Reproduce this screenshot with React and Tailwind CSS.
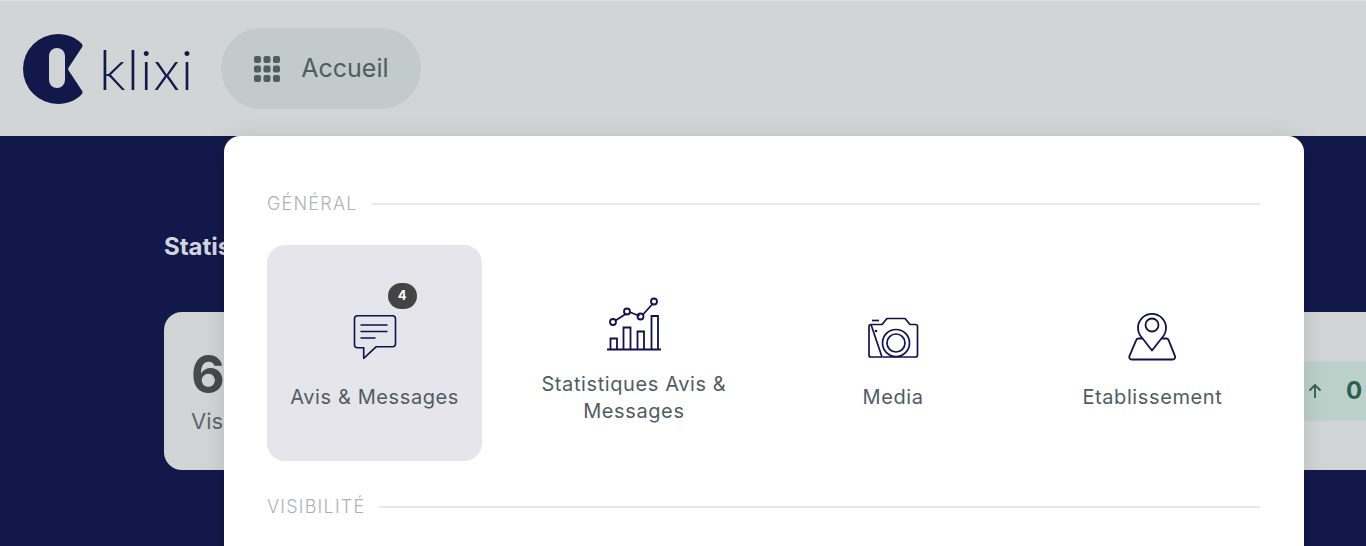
import React from 'react';

const ink = '#0f1150';

function MessageIcon() {
  return <svg width="64" height="64" viewBox="0 0 64 64" fill="none" stroke={ink} strokeWidth="1.6" strokeLinejoin="round">
    <path d="M14.5 10.8h35a3 3 0 0 1 3 3v25a3 3 0 0 1-3 3H33l-12.300 11.500V42.800h-6.200a3 3 0 0 1-3-3v-26a3 3 0 0 1 3-3z" />
    <path d="M17.500 20h27M17.500 26.500h27M17.500 33h15" />
  </svg>;
}

function ChartIcon() {
  return <svg width="64" height="64" viewBox="0 0 64 64" fill="none" stroke={ink} strokeWidth="1.8">
    <path d="M5 57.500h54" />
    <path d="M8.500 57v-10.500h6.500V57M21.500 57V35.500h7V57M35.500 57V39.500h6.500V57M49.500 57V24h6.500v33" />
    <path d="M13.500 28.500l11-7M27.500 20l10 4M40.500 23l10.500-11.500" />
    <circle cx="11" cy="30" r="3" />
    <circle cx="25" cy="19.500" r="3" />
    <circle cx="38.500" cy="24.500" r="3" />
    <circle cx="52" cy="9.500" r="3" />
  </svg>;
}

function CameraIcon() {
  return <svg width="64" height="64" viewBox="0 0 64 64" fill="none" stroke={ink} strokeWidth="1.7" strokeLinejoin="round">
    <path d="M10 19.500h11l5-6h18l5 6h5.500a2 2 0 0 1 2 2V50a2 2 0 0 1-2 2H22M21 52H10a2 2 0 0 1-2-2V21.500a2 2 0 0 1 2-2z" />
    <path d="M11 15.500h7" />
    <circle cx="35" cy="38" r="13.500" fill="#fff" />
    <circle cx="35" cy="38" r="9" />
    <circle cx="15" cy="26" r="1.300" fill={ink} stroke="none" />
  </svg>;
}

function PinIcon() {
  return <svg width="64" height="64" viewBox="0 0 64 64" fill="none" stroke={ink} strokeWidth="1.8" strokeLinejoin="round">
    <path d="M22 33.500h-3.500a2.500 2.500 0 0 0-2.300 1.600l-6.800 16a2.500 2.500 0 0 0 2.300 3.400h41a2.500 2.500 0 0 0 2.300-3.400l-6.400-16a2.500 2.500 0 0 0-2.300-1.600H42" />
    <path d="M32 45.500l-10.200-13a14 14 0 1 1 20.400 0z" fill="#fff" />
    <circle cx="32" cy="20" r="6.500" />
  </svg>;
}

function Logo() {
  return <div className="flex items-center">
    <svg width="60" height="72" viewBox="0 0 60 72" className="shrink-0">
      <path fill="#13184b" d="M35 1a35 35 0 0 0 0 70c9.500 0 17.500-3.500 23.500-9.500a3 3 0 0 0 0-4.500L46 38a3 3 0 0 1 0-4L58.500 15a3 3 0 0 0 0-4.500C52.500 4.500 44.500 1 35 1z" />
      <rect x="26" y="15" width="16" height="40" rx="8" fill="#d1d5d6" />
    </svg>
    <span className="ml-[16px] text-[56px] leading-none font-light tracking-[1px] text-[#13184b] font-['Lato',sans-serif]">klixi</span>
  </div>;
}

function SectionTitle({ children }) {
  return <div className="flex items-center gap-[14px]">
    <span className="text-[18px] leading-[26px] font-light tracking-[1.2px] text-[#aeb1b6]">{children}</span>
    <div className="h-[2px] flex-1 bg-[#e9e9ea]" />
  </div>;
}

function Tile({ label, icon, active, badge }) {
  return <div className={`h-[216px] rounded-[18px] pt-[10px] flex flex-col items-center justify-center gap-[15px] ${active ? 'bg-[#e5e5eb]' : ''}`}>
    <div className="relative w-[64px] h-[64px]">
      {icon}
      {badge && <span className="absolute left-[45px] top-[-22px] w-[29px] h-[26px] rounded-full bg-[#444444] flex items-center justify-center text-[13px] font-bold text-white">{badge}</span>}
    </div>
    <p className="text-center text-[20px] leading-[27px] tracking-[0.6px] text-[#4e5d63] px-2">{label}</p>
  </div>;
}

export default function App() {
  return <div className="relative h-[546px] overflow-hidden bg-[#13184b] font-['Inter',sans-serif]">
    <header className="h-[136px] bg-[#d1d5d6] border-t border-[#dcdfe0] flex items-center pl-[23px] gap-[27px]">
      <Logo />
      <button className="w-[200px] h-[81px] rounded-full bg-[#c2cacb] flex items-center pl-[33px] gap-[21px] text-[25px] text-[#4f5d62]">
        <svg width="26" height="26" viewBox="0 0 26 26" fill="#4f5d62">
          <rect x="0" y="0" width="7" height="7" rx="2" />
          <rect x="9.500" y="0" width="7" height="7" rx="2" />
          <rect x="19" y="0" width="7" height="7" rx="2" />
          <rect x="0" y="9.500" width="7" height="7" rx="2" />
          <rect x="9.500" y="9.500" width="7" height="7" rx="2" />
          <rect x="19" y="9.500" width="7" height="7" rx="2" />
          <rect x="0" y="19" width="7" height="7" rx="2" />
          <rect x="9.500" y="19" width="7" height="7" rx="2" />
          <rect x="19" y="19" width="7" height="7" rx="2" />
        </svg>
        Accueil
      </button>
    </header>

    <main className="pl-[164px] pt-[94px]">
      <h2 className="text-[24px] leading-[34px] font-bold text-[#d3d6de]">Statistiques</h2>
      <div className="mt-[48px] w-[1300px] h-[158px] rounded-[18px] bg-[#d1d5d6] flex items-center justify-between pl-[27px] pr-[50px]">
        <div>
          <p className="text-[52px] leading-[60px] font-bold text-[#454a4c]">6</p>
          <p className="text-[22px] leading-[32px] text-[#5a676d]">Visites</p>
        </div>
        <div className="w-[120px] h-[60px] rounded-[16px] bg-[#bcd1c9] flex items-center pl-[14px] gap-[24px] text-[24px] font-bold text-[#2f5f52]">
          <svg width="14" height="16" viewBox="0 0 14 16" fill="none" stroke="#2f5f52" strokeWidth="1.8">
            <path d="M7 15V2M1.500 7.500L7 2l5.500 5.500" />
          </svg>
          0
        </div>
      </div>
    </main>

    <div className="absolute left-[224px] top-[136px] w-[1080px] h-[480px] rounded-[16px] bg-white shadow-[0_4px_24px_rgba(0,0,0,0.12)] pl-[43px] pr-[44px] pt-[55px]">
      <SectionTitle>GÉNÉRAL</SectionTitle>
      <div className="grid grid-cols-4 gap-x-[44px] mt-[28px]">
        <Tile label="Avis & Messages" icon={<MessageIcon />} active badge="4" />
        <Tile label="Statistiques Avis & Messages" icon={<ChartIcon />} />
        <Tile label="Media" icon={<CameraIcon />} />
        <Tile label="Etablissement" icon={<PinIcon />} />
      </div>
      <div className="mt-[33px]">
        <SectionTitle>VISIBILITÉ</SectionTitle>
      </div>
    </div>
  </div>;
}
